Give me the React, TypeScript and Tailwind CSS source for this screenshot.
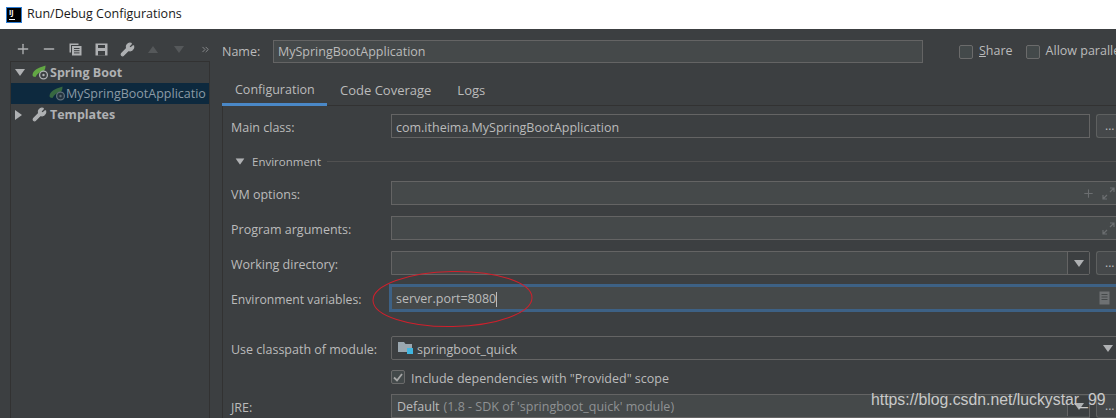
import React from 'react';
import { Plus, Minus, Wrench, ChevronsRight } from 'lucide-react';

const font = { fontFamily: '"Open Sans", "Noto Sans", sans-serif' };

const Triangle = ({ dir, className }: { dir: 'down' | 'right' | 'up'; className?: string }) => {
    const points = dir === 'down' ? '0,0 10,0 5,7' : dir === 'up' ? '0,7 10,7 5,0' : '0,0 7,5 0,10';
    return (
        <svg width={dir === 'right' ? 7 : 10} height={dir === 'right' ? 10 : 7} className={className}>
            <polygon points={points} fill="currentColor" />
        </svg>
    );
};

const SpringIcon = ({ dim }: { dim?: boolean }) => (
    <svg width="17" height="15" viewBox="0 0 17 15" className={dim ? 'opacity-50 shrink-0' : 'shrink-0'}>
        <path d="M0.5 10 C1 5 6 3 13.5 0.5 C13.5 3 13 4.5 12 6 C8 6.5 5 9 3.5 12 C1.5 12 0.5 11 0.5 10 Z" fill="#62a744" />
        <circle cx="11.5" cy="10" r="3.9" fill="#3c3f41" stroke="#afb1b3" strokeWidth="1.3" />
        <circle cx="11.5" cy="10" r="1.2" fill="#afb1b3" />
    </svg>
);

const CopyIcon = () => (
    <svg width="13" height="13" viewBox="0 0 13 13">
        <path d="M0.5 0.5 H9.5 V2 H2 V9.5 H0.5 Z" fill="#afb1b3" />
        <rect x="3" y="3" width="9.5" height="9.5" fill="#afb1b3" />
        <path d="M5 5.5 H10.5 M5 7.7 H10.5 M5 9.9 H10.5" stroke="#3c3f41" strokeWidth="1" />
    </svg>
);

const SaveIcon = () => (
    <svg width="13" height="13" viewBox="0 0 13 13">
        <path d="M0.5 0.5 H12.5 V12.5 H0.5 Z" fill="#afb1b3" />
        <rect x="3" y="2" width="7" height="3" fill="#3c3f41" />
        <rect x="3" y="8" width="7" height="4.5" fill="#3c3f41" />
    </svg>
);

const ExpandIcon = () => (
    <svg width="13" height="13" viewBox="0 0 13 13" fill="none" stroke="#6b6e70" strokeWidth="1.2" className="shrink-0">
        <path d="M1 12 L5 8 M8 5 L12 1 M8 1 H12 V5 M1 8 V12 H5" />
    </svg>
);

const BrowseButton = () => (
    <div className="ml-[6px] w-[20px] h-full shrink-0 rounded-l-[3px] border border-r-0 border-[#5e6060] bg-[#45484a] flex pl-[8px] items-center text-[#bbbbbb] text-[12px]">
        ...
    </div>
);

const ToolCell = ({ children }: { children: React.ReactNode }) => (
    <div className="w-[26px] shrink-0 flex items-center justify-center">{children}</div>
);

const Row = ({ label, className, children }: { label: string; className?: string; children: React.ReactNode }) => (
    <div className={`flex items-stretch h-[24px] ${className ?? ''}`}>
        <div className="w-[168px] shrink-0 pl-[8px] pt-[5px] flex items-center text-[#bbbbbb] text-[12.5px]">{label}</div>
        {children}
    </div>
);

const Sidebar = () => (
    <aside className="w-[222px] shrink-0 flex flex-col pl-[10px]">
        <div className="h-[32px] pt-[8px] flex items-center text-[#afb1b3]">
            <ToolCell><Plus size={16} strokeWidth={2} /></ToolCell>
            <ToolCell><Minus size={16} strokeWidth={2} /></ToolCell>
            <ToolCell><CopyIcon /></ToolCell>
            <ToolCell><SaveIcon /></ToolCell>
            <ToolCell><Wrench size={15} strokeWidth={2} fill="currentColor" /></ToolCell>
            <ToolCell><Triangle dir="up" className="text-[#55585a]" /></ToolCell>
            <ToolCell><Triangle dir="down" className="text-[#55585a]" /></ToolCell>
            <ToolCell><ChevronsRight size={11} className="text-[#8c8e90]" /></ToolCell>
        </div>
        <div className="w-[200px] flex-1 border border-[#323232] border-b-0">
            <div className="h-[21px] flex items-center pl-[4px] font-bold text-[#afb1b3] text-[12.5px]">
                <Triangle dir="down" />
                <div className="ml-[7px]"><SpringIcon /></div>
                <span className="ml-[1px] pt-[2px]">Spring Boot</span>
            </div>
            <div className="h-[21px] flex items-center pl-[38px] bg-[#0d293e] text-[#8b9aa5] text-[12.5px] overflow-hidden whitespace-nowrap">
                <SpringIcon dim />
                <span className="pt-[2px]">MySpringBootApplicatio</span>
            </div>
            <div className="h-[21px] flex items-center pl-[4px] font-bold text-[#afb1b3] text-[12.5px]">
                <Triangle dir="right" />
                <Wrench size={15} strokeWidth={2} fill="currentColor" className="ml-[10px]" />
                <span className="ml-[3px] pt-[2px]">Templates</span>
            </div>
        </div>
    </aside>
);

export default function App() {
    return (
        <div className="relative w-[1116px] h-[418px] overflow-hidden bg-[#3c3f41] flex flex-col" style={font}>
            <header className="h-[29px] shrink-0 bg-white flex items-center pl-[6px] gap-[5px] text-[#1a1a1a] text-[12.5px]">
                <div className="w-[16px] h-[16px] bg-black border border-[#2f7fd6] flex flex-col items-start pl-[2px] pt-[1px] text-white text-[7px] font-bold leading-[7px]">
                    IJ
                    <div className="w-[6px] h-px bg-white mt-[3px]" />
                </div>
                <span>Run/Debug Configurations</span>
            </header>

            <div className="flex flex-1 min-h-0">
                <Sidebar />

                <main className="flex-1 min-w-0 flex flex-col text-[#bbbbbb] text-[12.5px] whitespace-nowrap">
                    {/* name and share options */}
                    <div className="h-[24px] mt-[11px] flex items-stretch">
                        <div className="w-[51px] shrink-0 flex items-center pt-[1px]">Name:</div>
                        <div className="w-[650px] shrink-0 border border-[#646464] bg-[#45494a] pl-[4px] pt-[1px] flex items-center">MySpringBootApplication</div>
                        <div className="flex items-center ml-[36px] shrink-0">
                            <div className="w-[14px] h-[14px] rounded-[2px] border border-[#6b6b6b] bg-[#43494a]" />
                            <span className="ml-[6px]"><span className="underline">S</span>hare</span>
                            <div className="w-[14px] h-[14px] rounded-[2px] border border-[#6b6b6b] bg-[#43494a] ml-[13px]" />
                            <span className="ml-[6px]">Allow parallel run</span>
                        </div>
                    </div>

                    {/* tabs */}
                    <div className="h-[29px] mt-[14px] flex border-b border-[#323232] shrink-0">
                        <div className="w-[105px] h-[29px] pl-[13px] pt-[4px] border-b-[3px] border-[#4a88c7]">Configuration</div>
                        <div className="pl-[13px] pt-[4px] text-[13px]">Code Coverage</div>
                        <div className="pl-[26px] pt-[4px] text-[13px]">Logs</div>
                    </div>

                    <div className="flex flex-col flex-1 border-l border-[#323232]">
                        <Row label="Main class:" className="mt-[8px]">
                            <div className="flex-1 border border-[#646464] bg-[#3c3f41] pl-[4px] pt-[5px] flex items-center">com.itheima.MySpringBootApplication</div>
                            <BrowseButton />
                        </Row>

                        <div className="flex items-center h-[20px] mt-[13px] pl-[12px]">
                            <Triangle dir="down" className="text-[#afb1b3] scale-90" />
                            <span className="ml-[7px] pt-[1px] text-[11.5px]">Environment</span>
                            <div className="flex-1 h-px bg-[#515151] ml-[6px]" />
                        </div>

                        <Row label="VM options:" className="mt-[10px]">
                            <div className="flex-1 border border-[#646464] bg-[#45494a] flex items-center justify-end gap-[7px] pr-[6px] -mr-[6px]">
                                <Plus size={13} strokeWidth={2} className="text-[#6b6e70]" />
                                <ExpandIcon />
                            </div>
                        </Row>
                        <Row label="Program arguments:" className="mt-[11px]">
                            <div className="flex-1 border border-[#646464] bg-[#45494a] flex items-center justify-end pr-[6px] -mr-[6px]">
                                <ExpandIcon />
                            </div>
                        </Row>
                        <Row label="Working directory:" className="mt-[11px]">
                            <div className="flex-1 border border-[#646464] bg-[#45494a] rounded-r-[2px] flex justify-end">
                                <div className="w-[22px] border-l border-[#646464] bg-[#3c3f41] flex items-center justify-center">
                                    <Triangle dir="down" className="text-[#afb1b3]" />
                                </div>
                            </div>
                            <BrowseButton />
                        </Row>

                        {/* focused field */}
                        <div className="flex items-stretch h-[28px] mt-[9px]">
                            <div className="w-[166px] shrink-0 pl-[8px] pt-[5px] flex items-center text-[12.2px]">Environment variables:</div>
                            <div className="flex-1 border-[3px] border-[#3d6185] bg-[#45494a] pl-[4px] pr-[9px] flex items-center -mr-[6px]">
                                <span className="pt-[3px]">server.port=8080</span>
                                <div className="w-px h-[15px] mt-[2px] bg-[#bbbbbb]" />
                                <svg width="11" height="14" viewBox="0 0 11 14" className="ml-auto">
                                    <rect x="0.5" y="0.5" width="10" height="13" fill="#6e7173" />
                                    <path d="M2.5 3.5 H8.5 M2.5 6 H8.5 M2.5 8.5 H8.5" stroke="#45494a" strokeWidth="1" />
                                </svg>
                            </div>
                        </div>

                        <Row label="Use classpath of module:" className="mt-[24px]">
                            <div className="flex-1 rounded-[2px] border border-[#646464] bg-[#3c3f41] pl-[6px] pr-[8px] flex items-center -mr-[6px]">
                                <svg width="16" height="14" viewBox="0 0 16 14">
                                    <path d="M0 1 H6 L7.5 3 H14 V11 H0 Z" fill="#9aa7b0" />
                                    <rect x="9" y="7" width="6" height="6" fill="#40b6e0" />
                                </svg>
                                <span className="ml-[3px] pt-[5px]">springboot_quick</span>
                                <Triangle dir="down" className="ml-auto text-[#afb1b3]" />
                            </div>
                        </Row>

                        <div className="flex items-center h-[16px] mt-[9px] pl-[168px]">
                            <div className="w-[14px] h-[14px] rounded-[2px] border border-[#6b6b6b] bg-[#43494a] flex items-center justify-center">
                                <svg width="10" height="9" viewBox="0 0 10 9" fill="none" stroke="#a7a7a7" strokeWidth="1.8">
                                    <path d="M1 4.5 L4 7.5 L9 1" />
                                </svg>
                            </div>
                            <span className="ml-[6px] pt-[5px]">Include dependencies with "Provided" scope</span>
                        </div>

                        <Row label="JRE:" className="mt-[9px]">
                            <div className="flex-1 border border-[#646464] bg-[#45494a] pl-[5px] pt-[2px] flex items-center">
                                <span>Default</span>
                                <span className="ml-[4px] text-[#8f9294]">(1.8 - SDK of 'springboot_quick' module)</span>
                                <div className="ml-auto w-[22px] h-full -mt-[2px] border-l border-[#646464] bg-[#3c3f41] flex items-center justify-center">
                                    <Triangle dir="down" className="text-[#afb1b3]" />
                                </div>
                            </div>
                            <BrowseButton />
                        </Row>
                    </div>
                </main>
            </div>

            {/* hand-drawn marker around the env var */}
            <svg width="170" height="64" viewBox="0 0 170 64" className="absolute left-[368px] top-[267px]" fill="none">
                <ellipse cx="84.5" cy="32" rx="79.5" ry="27.5" stroke="#d0202c" strokeWidth="1" transform="rotate(-1 84.5 32)" />
            </svg>

            <div className="absolute left-[871px] top-[388px] text-[#c9c9c9] text-[15.8px] whitespace-nowrap" style={{ fontFamily: '"Liberation Sans", sans-serif' }}>
                https://blog.csdn.net/luckystar_99
            </div>
        </div>
    );
}
